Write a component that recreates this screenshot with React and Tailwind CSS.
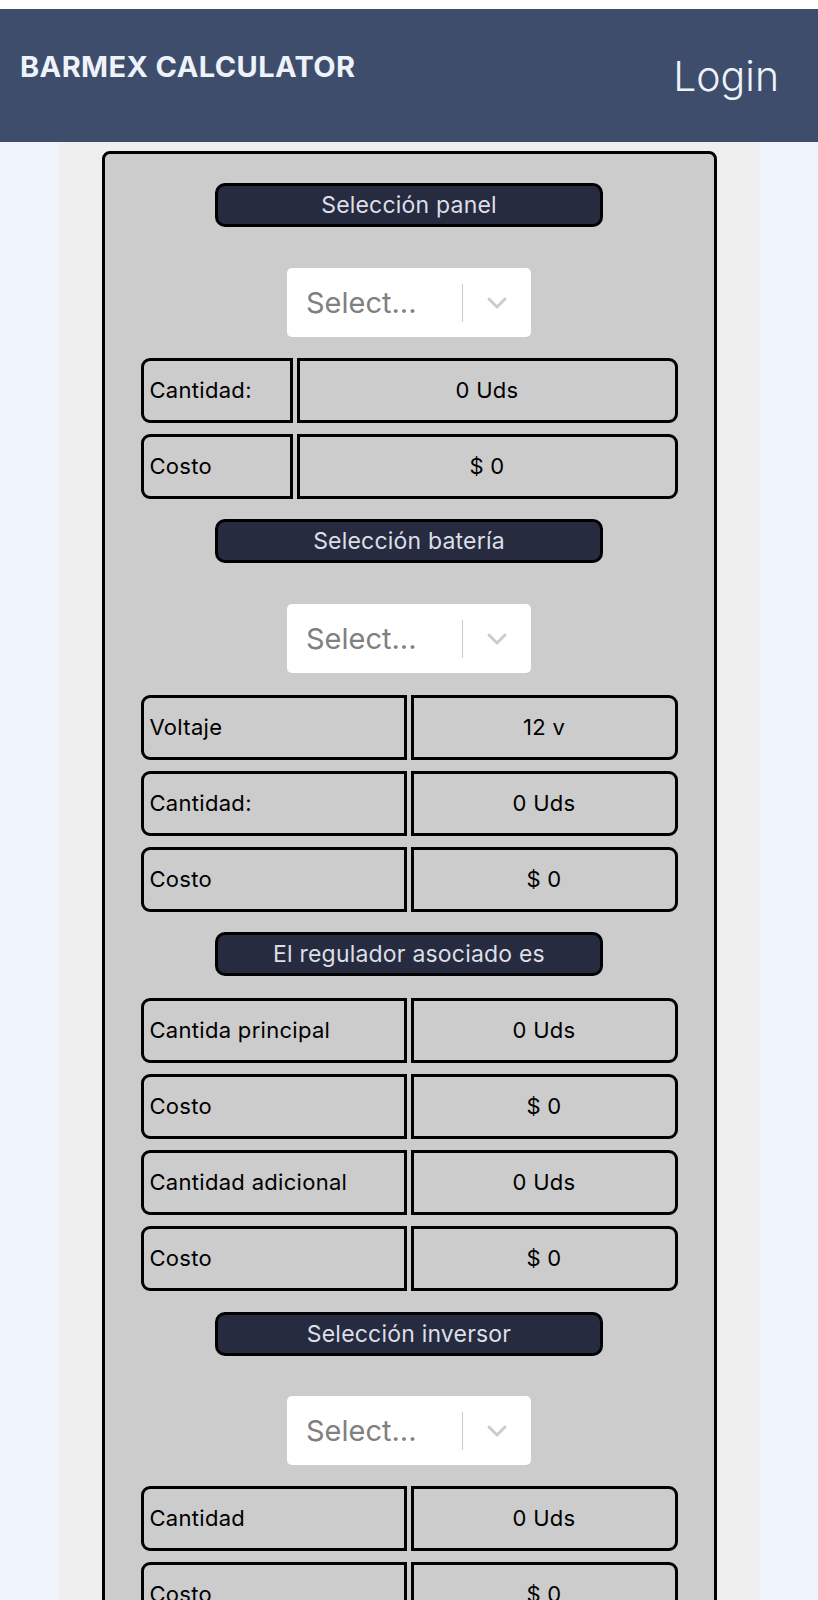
import React from "react";

const font = { fontFamily: "Inter, 'Noto Sans', sans-serif" };

function Pill({ children }) {
  return (
    <div className="mx-auto flex h-[44px] w-[388px] items-center justify-center rounded-[10px] border-[3px] border-black bg-[#262b40] text-[23px] tracking-[0.2px] text-[#dcdfe6]">
      {children}
    </div>
  );
}

function SelectBox() {
  return (
    <div className="mx-auto flex h-[69px] w-[244px] items-center rounded-[5px] bg-white pl-[19px]">
      <span className="flex-1 text-[29px] text-[#808080]">Select...</span>
      <span className="h-[38px] w-px bg-[#cccccc]" />
      <span className="flex w-[68px] justify-center">
        <svg width="22" height="14" viewBox="0 0 22 14" fill="none">
          <path d="M3 3l8 8 8-8" stroke="#cccccc" strokeWidth="3" strokeLinecap="round" strokeLinejoin="round" />
        </svg>
      </span>
    </div>
  );
}

function Row({ label, value, narrow }) {
  return (
    <div className="flex h-[65px] gap-[4px]">
      <div
        className={
          (narrow ? "w-[152px] " : "w-[266px] ") +
          "flex items-center rounded-l-[9px] border-[3px] border-black pl-[6px] text-[22px] tracking-[0.3px] text-black"
        }
      >
        {label}
      </div>
      <div className="flex flex-1 items-center justify-center rounded-r-[9px] border-[3px] border-black text-[22px] tracking-[0.3px] text-black">
        {value}
      </div>
    </div>
  );
}

export default function App() {
  return (
    <div className="min-h-[1600px] bg-[#eff3fb]" style={font}>
      <div className="h-[9px] bg-white" />
      <nav className="flex h-[133px] items-center justify-between bg-[#3e4d6c] pl-[20px] pr-[39px]">
        <span className="mb-[17px] text-[29px] font-bold tracking-[0.4px] text-[#eef2fa]">BARMEX CALCULATOR</span>
        <span className="mt-[3px] text-[41px] font-light text-[#eef2fa]">Login</span>
      </nav>
      <div className="mx-auto w-[701px] bg-[#efefef] px-[43px] pt-[9px]">
        <div className="rounded-[8px] border-[3px] border-black bg-[#cccccc] px-[36px] pt-[29px] pb-[30px]">
          <Pill>Selección panel</Pill>
          <div className="mt-[41px]">
            <SelectBox />
          </div>
          <div className="mt-[21px] flex flex-col gap-[11px]">
            <Row narrow label="Cantidad:" value="0 Uds" />
            <Row narrow label="Costo" value="$ 0" />
          </div>
          <div className="mt-[20px]">
            <Pill>Selección batería</Pill>
          </div>
          <div className="mt-[41px]">
            <SelectBox />
          </div>
          <div className="mt-[22px] flex flex-col gap-[11px]">
            <Row label="Voltaje" value="12 v" />
            <Row label="Cantidad:" value="0 Uds" />
            <Row label="Costo" value="$ 0" />
          </div>
          <div className="mt-[20px]">
            <Pill>El regulador asociado es</Pill>
          </div>
          <div className="mt-[22px] flex flex-col gap-[11px]">
            <Row label="Cantida principal" value="0 Uds" />
            <Row label="Costo" value="$ 0" />
            <Row label="Cantidad adicional" value="0 Uds" />
            <Row label="Costo" value="$ 0" />
          </div>
          <div className="mt-[21px]">
            <Pill>Selección inversor</Pill>
          </div>
          <div className="mt-[40px]">
            <SelectBox />
          </div>
          <div className="mt-[21px] flex flex-col gap-[11px]">
            <Row label="Cantidad" value="0 Uds" />
            <Row label="Costo" value="$ 0" />
          </div>
        </div>
      </div>
    </div>
  );
}
